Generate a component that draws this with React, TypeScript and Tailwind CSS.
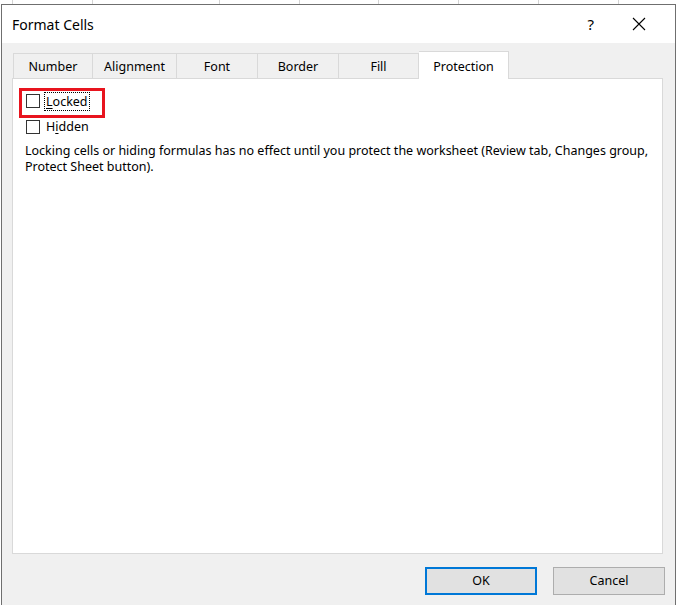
import React from "react";

const font = { fontFamily: '"Noto Sans", "Open Sans", sans-serif' };

function Tab({ label, w, first }: { label: string; w: number; first?: boolean }) {
  return (
    <div
      className={`h-[25px] flex items-center justify-center pt-[3px] border-t border-r border-[#d9d9d9] bg-[#f0f0f0] text-[12.5px] text-black ${first ? "border-l" : ""}`}
      style={{ width: w }}
    >
      {label}
    </div>
  );
}

function Checkbox() {
  return <div className="w-[14px] h-[14px] border border-[#333333] bg-white shrink-0" />;
}

export default function App() {
  return (
    <div className="w-[676px] h-[605px] bg-white overflow-hidden flex flex-col" style={font}>
      {/* background spreadsheet grid strip */}
      <div className="h-[4px] w-full flex bg-white relative shrink-0">
        <div className="w-[13px] border-r border-[#d4d4d4]" />
        <div className="w-[80px] border-r border-[#d4d4d4]" />
        <div className="w-[127px] border-r border-[#d4d4d4]" />
        <div className="w-[80px] border-r border-[#d4d4d4]" />
        <div className="w-[79px] border-r border-[#d4d4d4]" />
        <div className="w-[80px] border-r border-[#d4d4d4]" />
        <div className="w-[80px] border-r border-[#d4d4d4]" />
        <div className="w-[80px] border-r border-[#d4d4d4]" />
      </div>
      <div className="flex flex-1">
        <div className="w-[1px] bg-white" />
        <div className="flex-1 flex flex-col border-t border-l border-r border-[#6f6f6f]">
          {/* title bar */}
          <div className="h-[38px] bg-white flex items-center pl-[10px] shrink-0">
            <span className="text-[14px] text-black">Format Cells</span>
            <div className="flex-1" />
            <span className="text-[15px] text-black mr-[38px]">?</span>
            <svg width="14" height="14" viewBox="0 0 14 14" className="mr-[29px]">
              <path d="M1 1 L13 13 M13 1 L1 13" stroke="#000" strokeWidth="1.1" />
            </svg>
          </div>
          {/* body */}
          <div className="flex-1 bg-[#f0f0f0] flex flex-col pl-[10px] pr-[12px]">
            <div className="flex items-end mt-[9px] pl-[1px] h-[26px]">
              <Tab label="Number" w={80} first />
              <Tab label="Alignment" w={84} />
              <Tab label="Font" w={81} />
              <Tab label="Border" w={81} />
              <Tab label="Fill" w={80} />
              <div className="w-[90px] h-[28px] -mb-px bg-white border-t border-r border-[#d9d9d9] flex items-center justify-center pt-[3px] text-[12.5px] text-black z-10">
                Protection
              </div>
            </div>
            <div className="h-[476px] bg-white border border-[#d9d9d9] relative">
              <div className="flex flex-col pl-[13px] pt-[15px]">
                <div className="flex items-center h-[14px]">
                  <Checkbox />
                  <span className="ml-[4px] px-[1px] border border-dotted border-black leading-[17px] text-[12.5px] text-black">
                    <span className="underline underline-offset-2">L</span>ocked
                  </span>
                </div>
                <div className="flex items-center h-[14px] mt-[12px]">
                  <Checkbox />
                  <span className="ml-[6px] text-[12.5px] text-black">
                    H<span className="underline underline-offset-2">i</span>dden
                  </span>
                </div>
                <p className="mt-[9px] -ml-[1px] text-[12.5px] leading-[16px] text-black w-[630px]">
                  Locking cells or hiding formulas has no effect until you protect the worksheet (Review tab, Changes group, Protect Sheet button).
                </p>
              </div>
              {/* red highlight */}
              <div className="absolute left-[6px] top-[9px] w-[86px] h-[30px] border-[3px] border-[#e8141e]" />
            </div>
            <div className="flex justify-end mt-[13px] gap-[16px]">
              <button className="w-[112px] h-[28px] bg-[#e1e1e1] border-2 border-[#0078d7] text-[12.5px] text-black">
                OK
              </button>
              <button className="w-[112px] h-[28px] bg-[#e1e1e1] border border-[#adadad] text-[12.5px] text-black -mr-[2px]">
                Cancel
              </button>
            </div>
          </div>
        </div>
      </div>
    </div>
  );
}
